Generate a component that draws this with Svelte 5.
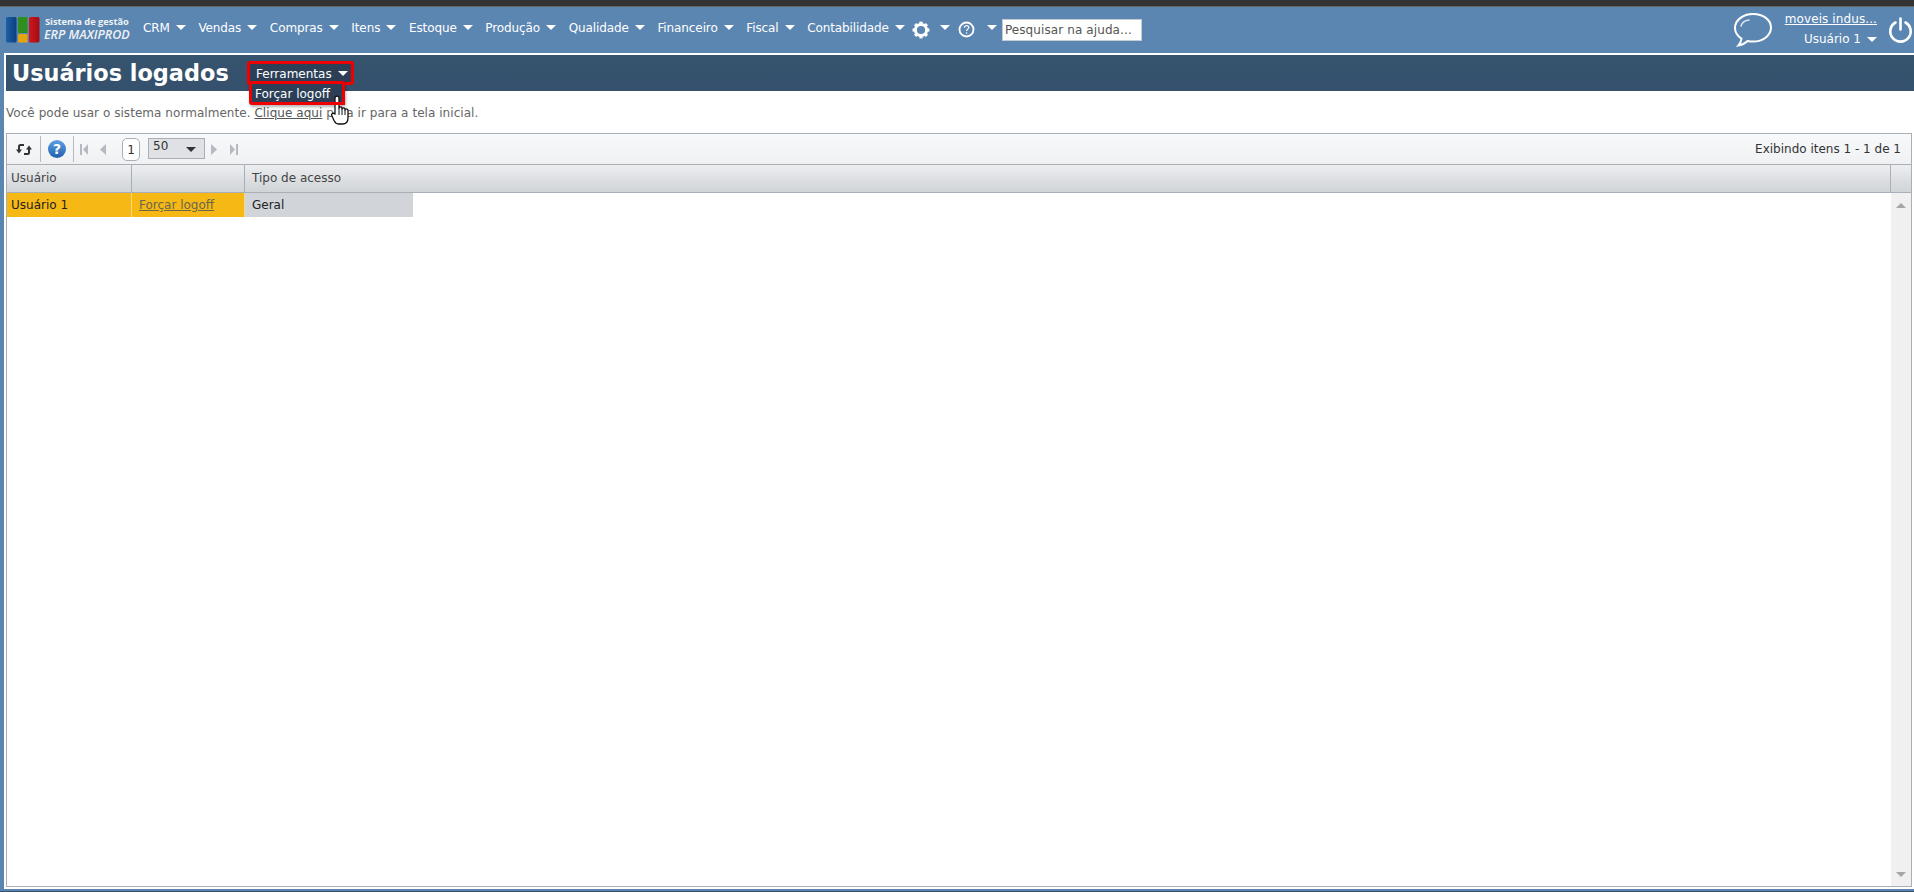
<script>
	const menus = ['CRM', 'Vendas', 'Compras', 'Itens', 'Estoque', 'Produção', 'Qualidade', 'Financeiro', 'Fiscal', 'Contabilidade'];
	const teeth = [0, 45, 90, 135, 180, 225, 270, 315];
</script>

<div class="page">
	<div class="topline"></div>
	<header class="header">
		<div class="logo">
			<svg width="34" height="26" viewBox="0 0 34 26">
				<defs>
					<linearGradient id="lb" x1="0" y1="0" x2="1" y2="0">
						<stop offset="0" stop-color="#1c5fa8" />
						<stop offset="1" stop-color="#0c3f7e" />
					</linearGradient>
					<linearGradient id="lr" x1="0" y1="0" x2="1" y2="0">
						<stop offset="0" stop-color="#d0161c" />
						<stop offset="1" stop-color="#a20c14" />
					</linearGradient>
				</defs>
				<rect x="0" y="0" width="10.5" height="25.5" rx="1.5" fill="url(#lb)" />
				<rect x="12" y="0" width="9.5" height="16" rx="1" fill="#2f8f1e" />
				<rect x="12" y="17" width="9.5" height="8.5" rx="1" fill="#e5a50f" />
				<rect x="23" y="0" width="10.5" height="25.5" rx="1.5" fill="url(#lr)" />
			</svg>
			<div class="logo-text">
				<span class="logo-top">Sistema de gestão</span>
				<span class="logo-bottom">ERP MAXIPROD</span>
			</div>
		</div>
		<nav class="nav">
			{#each menus as m}
				<span class="menu">{m}<i class="caret"></i></span>
			{/each}
			<span class="menu icon gear">
				<svg width="18" height="18" viewBox="0 0 18 18">
					<circle cx="9" cy="9" r="5.6" fill="none" stroke="#fff" stroke-width="3" />
					{#each teeth as t}
						<rect x="7.4" y="0.6" width="3.2" height="3.4" fill="#fff" transform="rotate({t} 9 9)" />
					{/each}
				</svg>
				<i class="caret"></i>
			</span>
			<span class="menu icon help">
				<svg width="17" height="17" viewBox="0 0 17 17">
					<circle cx="8.500" cy="8.500" r="7" fill="none" stroke="#fff" stroke-width="1.800" />
					<path d="M6.300 6.800c0-1.400 1-2.200 2.300-2.200s2.200.8 2.200 1.900c0 1.600-2.200 1.700-2.200 3.400" fill="none" stroke="#fff" stroke-width="1.200" />
					<circle cx="8.600" cy="12" r=".8" fill="#fff" />
				</svg>
				<i class="caret"></i>
			</span>
			<input class="search" placeholder="Pesquisar na ajuda..." />
		</nav>
		<div class="account">
			<svg class="balloon" width="40" height="36" viewBox="0 0 40 36">
				<path d="M20 2C9.800 2 2 8.300 2 16c0 4.300 2.600 8.100 6.500 10.600-.3 2.500-1.500 5-3.200 7 3.800-.5 7.200-2.600 9.300-4.600 1.800.4 3.600.6 5.400.6 10.200 0 18-6.300 18-14S30.200 2 20 2z" fill="none" stroke="#fff" stroke-width="2" />
				<path d="M8 14c1-3.500 4-5.500 8-6" fill="none" stroke="#dfe8f2" stroke-width="1.500" stroke-linecap="round" />
			</svg>
			<div class="user">
				<a class="company" href="#top">moveis indus...</a>
				<span class="username">Usuário 1<i class="caret"></i></span>
			</div>
			<svg class="power" width="25" height="26" viewBox="0 0 25 26">
				<path d="M7.500 5.500a10.200 10.200 0 1 0 10 0" fill="none" stroke="#fff" stroke-width="2.600" stroke-linecap="round" />
				<path d="M12.500 1.500v11" fill="none" stroke="#fff" stroke-width="2.600" stroke-linecap="round" />
			</svg>
		</div>
	</header>

	<main class="content">
		<div class="titlebar">
			<h1>Usuários logados</h1>
			<div class="tools">
				<button class="tools-button">Ferramentas<i class="caret"></i></button>
				<div class="tools-menu">Forçar logoff</div>
			</div>
		</div>

		<p class="notice">Você pode usar o sistema normalmente. <a href="#top">Clique aqui</a> para ir para a tela inicial.</p>

		<section class="grid">
			<div class="toolbar">
				<button class="tool refresh" aria-label="Atualizar">
					<svg width="16" height="13" viewBox="0 0 16 13">
						<path d="M8 2H4.500Q3 2 3 3.500V7" fill="none" stroke="#333" stroke-width="2" />
						<path d="M0 6.500h6L3 10.500z" fill="#333" />
						<path d="M8 11h3.500q1.500 0 1.500-1.500V6" fill="none" stroke="#333" stroke-width="2" />
						<path d="M10 6.500h6L13 2.500z" fill="#333" />
					</svg>
				</button>
				<button class="tool helpbtn" aria-label="Ajuda">
					<svg width="18" height="18" viewBox="0 0 18 18">
						<defs>
							<linearGradient id="hb" x1="0" y1="0" x2="0" y2="1">
								<stop offset="0" stop-color="#5fa0e4" />
								<stop offset="1" stop-color="#1f5fae" />
							</linearGradient>
						</defs>
						<circle cx="9" cy="9" r="9" fill="url(#hb)" />
						<text x="9" y="14" text-anchor="middle" class="qmark">?</text>
					</svg>
				</button>
				<div class="pager">
					<svg width="8" height="11" viewBox="0 0 8 11" class="first"><path d="M0 0h2v11H0zM8 0v11L3 5.500z" fill="#b5bac0" /></svg>
					<svg width="6" height="11" viewBox="0 0 6 11" class="prev"><path d="M6 0v11L0 5.500z" fill="#b5bac0" /></svg>
					<span class="pageno">1</span>
					<span class="select">50<i class="select-caret"></i></span>
					<svg width="6" height="11" viewBox="0 0 6 11" class="next"><path d="M0 0v11l6-5.500z" fill="#b5bac0" /></svg>
					<svg width="8" height="11" viewBox="0 0 8 11" class="last"><path d="M0 0v11l5-5.500zM6 0h2v11H6z" fill="#b5bac0" /></svg>
				</div>
				<span class="info">Exibindo itens 1 - 1 de 1</span>
			</div>

			<div class="thead">
				<div class="th c1">Usuário</div>
				<div class="th c2"></div>
				<div class="th c3">Tipo de acesso</div>
				<div class="th end"></div>
			</div>

			<div class="tbody">
				<div class="rows">
					<div class="row">
						<div class="td c1 hl">Usuário 1</div>
						<div class="td c2 hl"><a href="#top">Forçar logoff</a></div>
						<div class="td c3 gray">Geral</div>
					</div>
				</div>
				<div class="scroll">
					<i class="up"></i>
					<i class="down"></i>
				</div>
			</div>
		</section>
	</main>
	<div class="bottom"></div>

	<svg class="cursor" width="22" height="30" viewBox="0 0 22 30">
		<path d="M4 19V3c0-2.400 4-2.400 4 0v10c0-1.500 3-1.500 3 0v1c0-1.500 3-1.500 3 0v1c0-1.500 3-1.400 3 .5V23c0 3.500-2 6-5.500 6H7.500C5 29 4 27.500 3 25.500L.8 20.500c-.9-2 1.700-3 3.200-1.500z" fill="#fff" stroke="#111" stroke-width="1.300" stroke-linejoin="round" />
		<path d="M8 13v7M11 14v6M14 15v5" stroke="#111" stroke-width="1" fill="none" />
		<path d="M0 7h11V0h3v10H0z" fill="#ee0000" />
	</svg>
</div>

<style>
	:global(body) {
		margin: 0;
		background: #fff;
		font-family: "DejaVu Sans", Verdana, sans-serif;
		font-size: 12px;
		overflow: hidden;
	}
	.page {
		position: relative;
		height: 892px;
		display: flex;
		flex-direction: column;
		background: #5c86b2;
	}
	.topline {
		height: 6px;
		flex: none;
		background: #333;
		border-bottom: 1px solid #666;
	}
	.header {
		height: 45px;
		flex: none;
		display: flex;
		align-items: center;
		color: #fff;
	}
	.logo {
		width: 143px;
		padding-left: 6px;
		box-sizing: border-box;
		display: flex;
		gap: 4px;
		flex: none;
	}
	.logo-text {
		display: flex;
		flex-direction: column;
		gap: 0;
		margin-top: -1px;
		color: #eef2f6;
		white-space: nowrap;
	}
	.logo-top {
		font-family: "Open Sans", sans-serif;
		font-size: 9.300px;
		font-weight: 700;
		line-height: 12px;
		padding-left: 1px;
	}
	.logo-bottom {
		font-family: "Open Sans", sans-serif;
		font-size: 12.500px;
		font-weight: 600;
		font-style: italic;
		line-height: 14px;
	}
	.nav {
		display: flex;
		align-items: center;
		gap: 12.600px;
	}
	.menu {
		display: flex;
		align-items: center;
		white-space: nowrap;
		letter-spacing: -0.100px;
		margin-bottom: 4px;
	}
	.caret {
		display: inline-block;
		width: 0;
		height: 0;
		margin-left: 6px;
		border: 5px solid transparent;
		border-bottom: 0;
		border-top: 5px solid #fff;
	}
	.icon {
		margin-bottom: 0;
	}
	.icon.gear {
		margin-left: -5.600px;
	}
	.icon.gear .caret {
		margin: 0 0 4px 10px;
	}
	.icon.help {
		margin-left: -4.600px;
	}
	.icon.help .caret {
		margin: 0 0 4px 12px;
	}
	.search {
		width: 140px;
		height: 22px;
		box-sizing: border-box;
		margin-left: -7.600px;
		padding: 0 2px;
		border: 1px solid #c4ccd4;
		background: #fff;
		font: 12px "DejaVu Sans", sans-serif;
		letter-spacing: 0.100px;
	}
	.search::placeholder {
		color: #555;
		opacity: 1;
	}
	.account {
		margin-left: auto;
		display: flex;
		align-items: center;
	}
	.balloon {
		margin-right: 10px;
	}
	.user {
		width: 94px;
		display: flex;
		flex-direction: column;
		align-items: flex-end;
		gap: 7px;
		line-height: 13px;
		margin-right: 11px;
	}
	.company {
		color: #fff;
		letter-spacing: 0.100px;
	}
	.username {
		display: flex;
		align-items: center;
		letter-spacing: 0;
	}
	.username .caret {
		margin-left: 6px;
	}
	.power {
		margin-right: 1px;
	}
	.content {
		flex: 1;
		min-height: 0;
		display: flex;
		flex-direction: column;
		margin: 1px 0 0 4px;
		padding-top: 2px;
		background: #fff;
	}
	.titlebar {
		height: 36px;
		flex: none;
		margin-left: 2px;
		display: flex;
		background: linear-gradient(#37546f, #34506c);
		color: #fff;
	}
	h1 {
		margin: 0 0 0 6px;
		width: 235px;
		font-size: 22.400px;
		line-height: 36px;
		font-weight: bold;
		white-space: nowrap;
	}
	.tools {
		position: relative;
		padding-top: 6px;
	}
	.tools-button {
		display: flex;
		align-items: center;
		width: 107px;
		height: 24px;
		box-sizing: border-box;
		padding: 1px 0 0 6px;
		border: 3px solid #ee0000;
		border-radius: 3px;
		background: #2c3f57;
		color: #fff;
		font: 12px "DejaVu Sans", sans-serif;
		letter-spacing: 0;
	}
	.tools-button .caret {
		margin-left: 6px;
	}
	.tools-menu {
		position: absolute;
		top: 26px;
		left: 2px;
		width: 96px;
		height: 24px;
		box-sizing: border-box;
		padding: 2px 0 0 3px;
		border: 3px solid #ee0000;
		border-radius: 3px;
		background: #2c3f57;
		color: #fff;
		line-height: 16px;
		box-shadow: 1px 2px 3px rgba(0, 0, 0, 0.3);
	}
	.notice {
		margin: 0;
		height: 42px;
		flex: none;
		padding: 15px 0 0 2px;
		box-sizing: border-box;
		color: #666;
		line-height: 14px;
		letter-spacing: 0.050px;
	}
	.notice a {
		color: #555;
	}
	.grid {
		flex: 1;
		min-height: 0;
		display: flex;
		flex-direction: column;
		margin: 0 2px 2px 2px;
		border: 1px solid #a8afb6;
		color: #333;
	}
	.toolbar {
		height: 30px;
		flex: none;
		display: flex;
		align-items: center;
		border-bottom: 1px solid #a8afb6;
		background: linear-gradient(#f8f9fa, #eff1f3);
		padding-right: 10px;
	}
	.tool {
		height: 26px;
		padding: 0;
		border: 0;
		border-right: 1px solid #b5bac0;
		background: none;
		display: flex;
		align-items: center;
		justify-content: center;
	}
	.refresh {
		width: 34px;
	}
	.helpbtn {
		width: 33px;
	}
	.qmark {
		font: bold 14px "DejaVu Sans", sans-serif;
		fill: #fff;
	}
	.pager {
		display: flex;
		align-items: center;
		padding-left: 6px;
	}
	.prev {
		margin-left: 12px;
	}
	.pageno {
		width: 18px;
		height: 23px;
		margin-left: 16px;
		box-sizing: border-box;
		border: 1px solid #a8afb6;
		border-radius: 5px;
		background: #fff;
		text-align: center;
		line-height: 23px;
	}
	.select {
		position: relative;
		width: 57px;
		height: 21px;
		margin: -2px 0 0 8px;
		box-sizing: border-box;
		padding-left: 4px;
		border: 1px solid #a8afb6;
		background: #dfe1e4;
		line-height: 14px;
	}
	.select-caret {
		position: absolute;
		right: 8px;
		top: 8px;
		border: 5px solid transparent;
		border-bottom: 0;
		border-top: 5px solid #333;
	}
	.next {
		margin-left: 6px;
	}
	.last {
		margin-left: 13px;
	}
	.info {
		margin-left: auto;
	}
	.thead {
		height: 27px;
		flex: none;
		display: flex;
		border-bottom: 1px solid #a8afb6;
		background: linear-gradient(#eceef0, #d0d3d7);
	}
	.th {
		box-sizing: border-box;
		border-right: 1px solid #a8afb6;
		line-height: 27px;
		padding-left: 4px;
		color: #444;
	}
	.c1 {
		width: 125px;
		flex: none;
		box-sizing: border-box;
	}
	.c2 {
		width: 113px;
		flex: none;
		box-sizing: border-box;
	}
	.c3 {
		width: 168px;
		flex: none;
		box-sizing: border-box;
	}
	.th.c3 {
		flex: 1;
		padding-left: 7px;
	}
	.th.end {
		width: 20px;
		flex: none;
		border-right: 0;
	}
	.tbody {
		flex: 1;
		min-height: 0;
		display: flex;
	}
	.rows {
		flex: 1;
	}
	.row {
		display: flex;
		height: 24px;
	}
	.td {
		line-height: 24px;
		color: #222;
		padding-left: 4px;
	}
	.hl {
		background: #f5b814;
		border-right: 1px solid #f7d97e;
	}
	.td.c2 {
		padding-left: 7px;
	}
	.td.c2 a {
		color: #6b6650;
	}
	.gray {
		background: #d1d4d9;
		padding-left: 7px;
	}
	.scroll {
		position: relative;
		width: 20px;
		flex: none;
		background: #f0f0f0;
	}
	.up,
	.down {
		position: absolute;
		left: 5px;
		border: 5px solid transparent;
	}
	.up {
		top: 10px;
		border-top: 0;
		border-bottom: 5px solid #a6a6a6;
	}
	.down {
		bottom: 9px;
		border-bottom: 0;
		border-top: 5px solid #a6a6a6;
	}
	.bottom {
		height: 3px;
		flex: none;
		background: linear-gradient(#5c86b2 66%, #34506d 66%);
	}
	.cursor {
		position: absolute;
		left: 331px;
		top: 95px;
	}
</style>
